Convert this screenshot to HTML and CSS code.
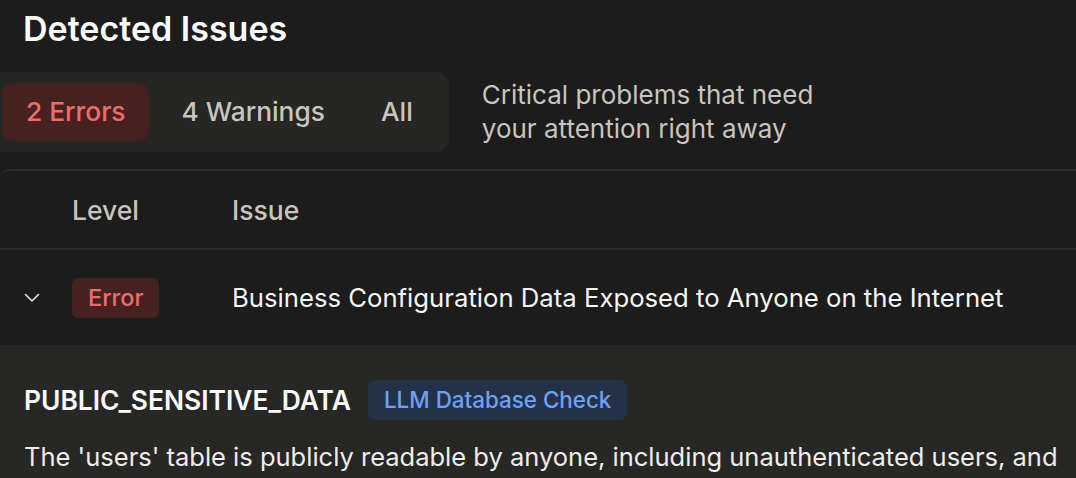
FILE: index.html
```html
<!DOCTYPE html>
<html lang="en">
<head>
<meta charset="utf-8">
<title>Detected Issues</title>
<link rel="stylesheet" href="styles.css">
</head>
<body>
<main class="page">
  <h1 class="title">Detected Issues</h1>
  <div class="filters">
    <div class="tabs">
      <button class="tab tab-active">2 Errors</button>
      <button class="tab">4 Warnings</button>
      <button class="tab">All</button>
    </div>
    <p class="hint">Critical problems that need<br>your attention right away</p>
  </div>
  <section class="table">
    <div class="thead">
      <span class="col-toggle"></span>
      <span class="col-level">Level</span>
      <span class="col-issue">Issue</span>
    </div>
    <div class="row">
      <span class="col-toggle">
        <svg class="chevron" viewBox="0 0 16 10" width="16" height="10"><path d="M1.5 1.5 L8 8 L14.5 1.5" fill="none" stroke="#e8e6e1" stroke-width="1.6" stroke-linecap="round" stroke-linejoin="round"/></svg>
      </span>
      <span class="col-level"><span class="level-badge">Error</span></span>
      <span class="col-issue issue-title">Business Configuration Data Exposed to Anyone on the Internet</span>
    </div>
    <div class="details">
      <div class="details-head">
        <span class="code">PUBLIC_SENSITIVE_DATA</span>
        <span class="source-badge">LLM Database Check</span>
      </div>
      <p class="details-text">The 'users' table is publicly readable by anyone, including unauthenticated users, and</p>
    </div>
  </section>
</main>
</body>
</html>
```

FILE: styles.css
```css
* { box-sizing: border-box; }
html, body { margin: 0; padding: 0; background: #1c1c1c; overflow: hidden; }
body {
  font-family: Inter, "Noto Sans", sans-serif;
  color: #f2f1ee;
  width: 1076px;
  height: 478px;
}
.page { padding: 0; }
.title {
  margin: 0;
  padding: 10px 23px 0;
  font-size: 34px;
  line-height: 38px;
  font-weight: 600;
  color: #fafaf8;
}
.filters {
  display: flex;
  align-items: center;
  gap: 33px;
  margin-top: 24px;
}
.tabs {
  display: flex;
  gap: 8px;
  margin-left: -8px;
  padding: 11px 12px 11px 10px;
  background: #262625;
  border-radius: 14px;
}
.tab {
  font-family: inherit;
  font-size: 26.3px;
  font-weight: 500;
  line-height: 58px;
  height: 58px;
  padding: 0 24px;
  border: 0;
  border-radius: 11px;
  background: transparent;
  color: #c9c5be;
}
.tab-active { background: #45221f; color: #f26b6b; }
.hint {
  margin: 0;
  font-size: 26px;
  line-height: 34px;
  color: #c9c5be;
}
.table {
  margin-top: 17px;
  border-top: 2px solid #2a2a29;
  border-radius: 10px 0 0 0;
}
.thead, .row {
  display: flex;
  align-items: center;
}
.thead {
  height: 79px;
  border-bottom: 2px solid #2a2a29;
  font-size: 26.5px;
  font-weight: 500;
  color: #c9c5be;
}
.row {
  height: 95px;
  font-size: 25.7px;
}
.col-toggle { width: 72px; padding-left: 24px; display: flex; align-items: center; }
.col-level { width: 160px; }
.level-badge {
  display: inline-block;
  padding: 0 16px;
  height: 40px;
  line-height: 40px;
  border-radius: 6px;
  background: #45221f;
  color: #f26b6b;
  font-size: 23.5px;
  font-weight: 500;
}
.issue-title { color: #f6f5f2; }
.details {
  background: #272726;
  padding: 35px 24px 0;
  height: 140px;
}
.details-head {
  display: flex;
  align-items: center;
  gap: 17px;
}
.code {
  font-size: 26.4px;
  font-weight: 600;
  color: #fafaf8;
}
.source-badge {
  height: 40px;
  line-height: 40px;
  padding: 0 16px;
  border-radius: 8px;
  background: #233249;
  color: #6ea2f5;
  font-size: 22.4px;
  font-weight: 500;
}
.details-text {
  margin: 20px 0 0;
  font-size: 25.5px;
  line-height: 34px;
  color: #eeede9;
  white-space: nowrap;
}
```
